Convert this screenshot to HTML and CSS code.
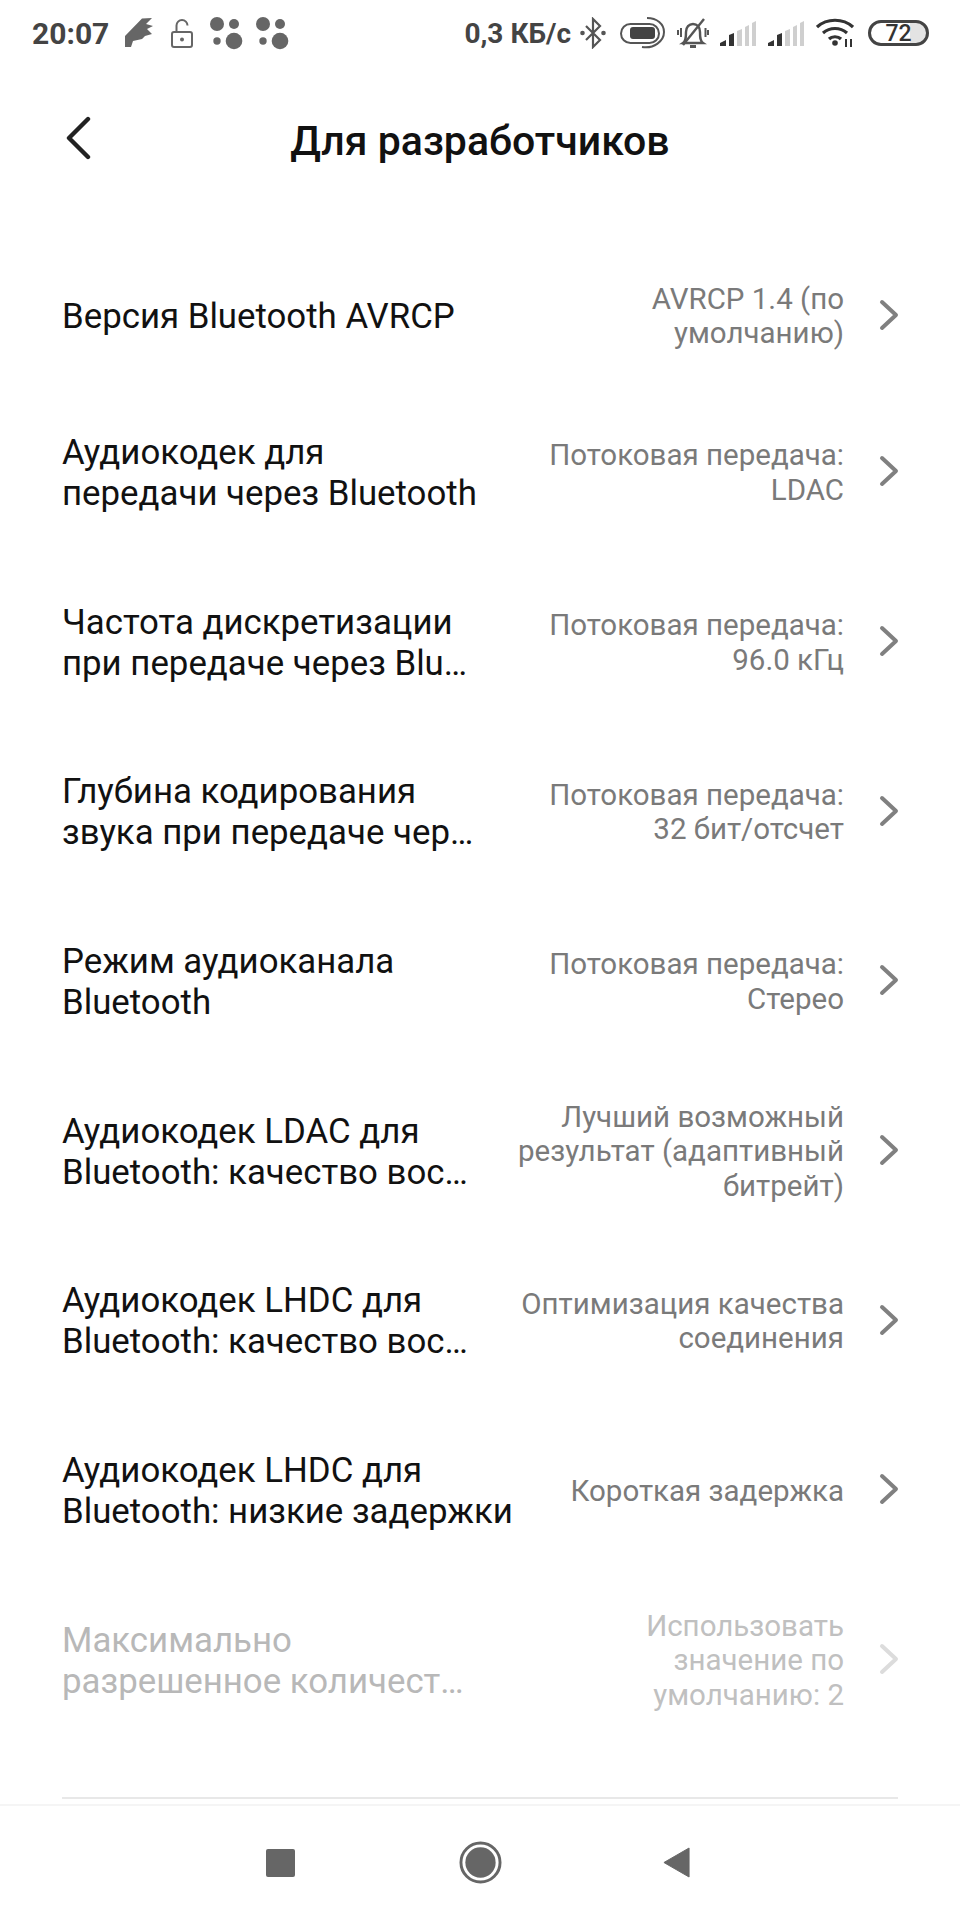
FILE: index.html
```html
<!DOCTYPE html>
<html lang="ru">
<head>
<meta charset="utf-8">
<title>Для разработчиков</title>
<link rel="stylesheet" href="styles.css">
</head>
<body>
<div class="screen">
  <div class="status">
    <div class="status-left">
      <span class="time">20:07</span>
      <svg class="i-hand" width="30" height="32" viewBox="0 0 30 32"><path d="M1 19L18 1.500 28 1l-6 6 7 2-6 3 5 5-7 2-3 3-9 2-2 6H1z" fill="#666"/></svg>
      <svg class="i-lock" width="22" height="30" viewBox="0 0 22 30" fill="none" stroke="#666" stroke-width="2"><rect x="1" y="14" width="20" height="15" rx="2"/><path d="M5.500 14V7.500a5.500 5.500 0 0 1 11 0"/><circle cx="11" cy="21.500" r="2" fill="#666" stroke="none"/></svg>
      <svg class="i-dots" width="34" height="34" viewBox="0 0 34 34" fill="#666"><circle cx="7" cy="8" r="7"/><circle cx="24" cy="8" r="5"/><circle cx="7" cy="25" r="3.700"/><circle cx="24" cy="25" r="8.300"/></svg>
      <svg width="34" height="34" viewBox="0 0 34 34" fill="#666"><circle cx="7" cy="8" r="7"/><circle cx="24" cy="8" r="5"/><circle cx="7" cy="25" r="3.700"/><circle cx="24" cy="25" r="8.300"/></svg>
    </div>
    <div class="status-right">
      <span class="speed">0,3 КБ/с</span>
      <svg class="i-bt" width="26" height="32" viewBox="0 0 26 32"><path d="M6 9l14 14-7 7V2l7 7L6 23" fill="none" stroke="#555" stroke-width="2.200"/><circle cx="2.500" cy="16" r="2.300" fill="#555"/><circle cx="23.500" cy="16" r="2.300" fill="#555"/></svg>
      <svg class="i-saver" width="46" height="32" viewBox="0 0 46 32" fill="none" stroke="#555" stroke-width="2"><rect x="1" y="7" width="38" height="19" rx="9.500"/><rect x="10" y="10" width="25" height="12" rx="3" fill="#444" stroke="none"/><path d="M27 1c10 0 17 6 17 14 0 9-10 17-22 15"/></svg>
      <svg class="i-bell" width="32" height="32" viewBox="0 0 32 32" fill="none" stroke="#555" stroke-width="2.400"><path d="M6 26c3-2 3-6 3-11 0-5 3-8 7-8s7 3 7 8c0 5 0 9 3 11z"/><path d="M13 29.500h6" stroke-width="3"/><path d="M6 28L27 2"/><path d="M4 11v9M1 13v5M28.500 11v9M31 13v5" stroke-width="2"/></svg>
      <svg class="i-sig" width="37" height="26" viewBox="0 0 37 26"><path d="M0 25v-3l6-3v6zM9 25V14l5-2v13z" fill="#333"/><path d="M17 25V10l5-2v17zM25 25V6l4-2v21zM32 25V2l4-2v25z" fill="#cfcfcf"/></svg>
      <svg class="i-sig" width="37" height="26" viewBox="0 0 37 26"><path d="M0 25v-3l6-3v6zM9 25V14l5-2v13z" fill="#333"/><path d="M17 25V10l5-2v17zM25 25V6l4-2v21zM32 25V2l4-2v25z" fill="#cfcfcf"/></svg>
      <svg class="i-wifi" width="38" height="30" viewBox="0 0 38 30" fill="none" stroke="#333" stroke-width="3.200"><path d="M1 9c10-9 26-9 36 0"/><path d="M7 15c7-6 17-6 24 0"/><path d="M13 21c3-3 9-3 12 0"/><circle cx="19" cy="25" r="2.800" fill="#333" stroke="none"/><path d="M30 21v8M35 21v8" stroke-width="2"/></svg>
      <div class="battery"><span class="battery-num">72</span></div>
    </div>
  </div>

  <header class="top">
    <svg class="back" width="28" height="44" viewBox="0 0 28 44"><path d="M24 3L5 22l19 19" fill="none" stroke="#222" stroke-width="4.400" stroke-linecap="round" stroke-linejoin="round"/></svg>
    <h1 class="heading">Для разработчиков</h1>
  </header>

  <main class="list">
    <div class="row row-short">
      <div class="label">Версия Bluetooth AVRCP</div>
      <div class="value">AVRCP 1.4 (по<br>умолчанию)</div>
      <svg class="chev" width="22" height="34" viewBox="0 0 22 34"><path d="M4 4l14 13L4 30" fill="none" stroke="#808080" stroke-width="4" stroke-linecap="round" stroke-linejoin="round"/></svg>
    </div>
    <div class="row">
      <div class="label">Аудиокодек для<br>передачи через Bluetooth</div>
      <div class="value">Потоковая передача:<br>LDAC</div>
      <svg class="chev" width="22" height="34" viewBox="0 0 22 34"><path d="M4 4l14 13L4 30" fill="none" stroke="#808080" stroke-width="4" stroke-linecap="round" stroke-linejoin="round"/></svg>
    </div>
    <div class="row">
      <div class="label">Частота дискретизации<br>при передаче через Blu…</div>
      <div class="value">Потоковая передача:<br>96.0 кГц</div>
      <svg class="chev" width="22" height="34" viewBox="0 0 22 34"><path d="M4 4l14 13L4 30" fill="none" stroke="#808080" stroke-width="4" stroke-linecap="round" stroke-linejoin="round"/></svg>
    </div>
    <div class="row">
      <div class="label">Глубина кодирования<br>звука при передаче чер…</div>
      <div class="value">Потоковая передача:<br>32 бит/отсчет</div>
      <svg class="chev" width="22" height="34" viewBox="0 0 22 34"><path d="M4 4l14 13L4 30" fill="none" stroke="#808080" stroke-width="4" stroke-linecap="round" stroke-linejoin="round"/></svg>
    </div>
    <div class="row">
      <div class="label">Режим аудиоканала<br>Bluetooth</div>
      <div class="value">Потоковая передача:<br>Стерео</div>
      <svg class="chev" width="22" height="34" viewBox="0 0 22 34"><path d="M4 4l14 13L4 30" fill="none" stroke="#808080" stroke-width="4" stroke-linecap="round" stroke-linejoin="round"/></svg>
    </div>
    <div class="row">
      <div class="label">Аудиокодек LDAC для<br>Bluetooth: качество вос…</div>
      <div class="value">Лучший возможный<br>результат (адаптивный<br>битрейт)</div>
      <svg class="chev" width="22" height="34" viewBox="0 0 22 34"><path d="M4 4l14 13L4 30" fill="none" stroke="#808080" stroke-width="4" stroke-linecap="round" stroke-linejoin="round"/></svg>
    </div>
    <div class="row">
      <div class="label">Аудиокодек LHDC для<br>Bluetooth: качество вос…</div>
      <div class="value">Оптимизация качества<br>соединения</div>
      <svg class="chev" width="22" height="34" viewBox="0 0 22 34"><path d="M4 4l14 13L4 30" fill="none" stroke="#808080" stroke-width="4" stroke-linecap="round" stroke-linejoin="round"/></svg>
    </div>
    <div class="row">
      <div class="label">Аудиокодек LHDC для<br>Bluetooth: низкие задержки</div>
      <div class="value">Короткая задержка</div>
      <svg class="chev" width="22" height="34" viewBox="0 0 22 34"><path d="M4 4l14 13L4 30" fill="none" stroke="#808080" stroke-width="4" stroke-linecap="round" stroke-linejoin="round"/></svg>
    </div>
    <div class="row row-off">
      <div class="label">Максимально<br>разрешенное количест…</div>
      <div class="value">Использовать<br>значение по<br>умолчанию: 2</div>
      <svg class="chev" width="22" height="34" viewBox="0 0 22 34"><path d="M4 4l14 13L4 30" fill="none" stroke="#dcdcdc" stroke-width="4" stroke-linecap="round" stroke-linejoin="round"/></svg>
    </div>
  </main>

  <div class="divider"></div>

  <nav class="navbar">
    <span class="nav-square"></span>
    <svg width="43" height="43" viewBox="0 0 44 44"><circle cx="22" cy="22" r="20" fill="none" stroke="#666" stroke-width="3"/><circle cx="22" cy="22" r="15.500" fill="#666"/></svg>
    <svg width="29" height="31" viewBox="0 0 30 32"><path d="M28 1v30L2 16z" fill="#666" stroke="#666" stroke-width="1" stroke-linejoin="round"/></svg>
  </nav>
</div>
</body>
</html>
```
FILE: styles.css
```css
* { box-sizing: border-box; }
html, body { margin: 0; padding: 0; background: #fff; }
body { font-family: Roboto, "Noto Sans", sans-serif; }
.screen { width: 960px; height: 1920px; display: flex; flex-direction: column; background: #fff; overflow: hidden; }

.status { height: 66px; padding: 0 31px 0 32px; display: flex; justify-content: space-between; align-items: center; color: #444; }
.status-left { display: flex; align-items: center; gap: 12px; }
.status-right { display: flex; align-items: center; gap: 12px; }
.time { font-size: 30px; font-weight: 700; color: #444; margin-right: 3px; }
.speed { font-size: 28px; font-weight: 700; color: #444; margin-right: -3px; }
.i-hand { margin-right: 5px; }
.i-lock { margin-right: 5px; }
.i-saver { margin-left: 2px; }
.i-bell { margin-left: -1px; }
.i-sig { margin-top: 1px; margin-left: -1px; }
.i-wifi { margin-left: -1px; }
.battery { width: 61px; height: 26px; margin-left: 2px; border: 3px solid #444; border-radius: 13px; background: linear-gradient(90deg, #fff 70%, #e3e3e3 70%); display: flex; align-items: center; justify-content: center; }
.battery-num { font-size: 23px; font-weight: 500; color: #333; line-height: 1; }

.top { height: 150px; display: grid; grid-template-columns: 1fr auto 1fr; align-items: center; }
.back { margin-left: 64px; margin-bottom: 6px; }
.heading { margin: 0; font-size: 41px; font-weight: 500; color: #111; }

.list { margin-top: 28px; display: flex; flex-direction: column; padding: 0 60px 0 62px; }
.row { height: 169.700px; display: flex; align-items: center; }
.row-short { height: 144px; }
.label { flex: 1; font-size: 34.800px; line-height: 41px; color: #111; white-space: nowrap; }
.value { text-align: right; font-size: 29.500px; line-height: 34.500px; color: #7a7a7a; white-space: nowrap; }
.chev { margin-left: 34px; margin-bottom: 3px; flex-shrink: 0; }
.row-off .label { color: #b8b8b8; }
.row-off .value { color: #c0c0c0; }

.divider { height: 2px; margin: 51px 62px 0 62px; background: #e8e8e8; }
.navbar { margin-top: 5px; border-top: 2px solid #f5f5f5; flex: 1; display: flex; align-items: center; justify-content: center; gap: 160px; padding-right: 4px; }
.nav-square { width: 29px; height: 28px; background: #666; border-radius: 2px; margin-right: 4px; }
```
